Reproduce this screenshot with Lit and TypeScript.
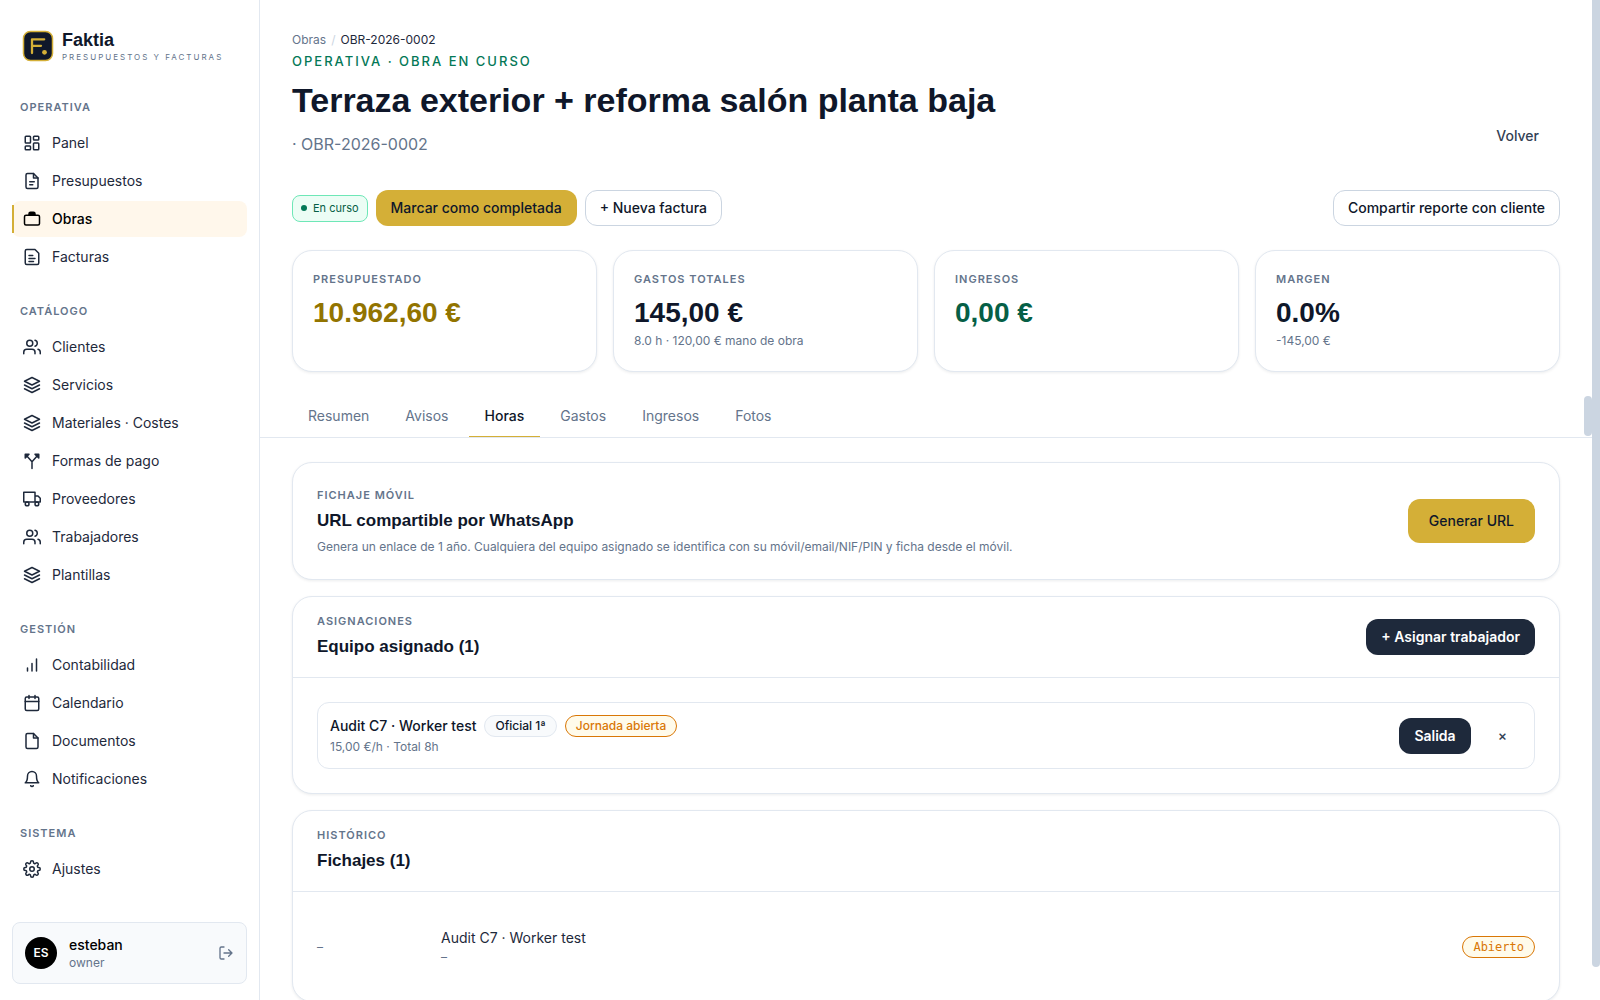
import { LitElement, html, css, svg, nothing, type TemplateResult } from "lit";
import { customElement, property, state } from "lit/decorators.js";
import { classMap } from "lit/directives/class-map.js";

const ICONS: Record<string, TemplateResult> = {
  panel: svg`<rect x="3" y="3" width="7" height="9" rx="1"/><rect x="14" y="3" width="7" height="5" rx="1"/><rect x="14" y="12" width="7" height="9" rx="1"/><rect x="3" y="16" width="7" height="5" rx="1"/>`,
  quote: svg`<path d="M14 2H6a2 2 0 0 0-2 2v16a2 2 0 0 0 2 2h12a2 2 0 0 0 2-2V8z"/><path d="M14 2v6h6M9 13h6M9 17h4"/>`,
  works: svg`<rect x="2" y="7" width="20" height="13" rx="2"/><path fill="currentColor" d="M8 7V5a2 2 0 0 1 2-2h4a2 2 0 0 1 2 2v2z"/>`,
  invoice: svg`<path d="M16 2H5a2 2 0 0 0-2 2v16a2 2 0 0 0 2 2h14a2 2 0 0 0 2-2V7z"/><path d="M8 10h5M8 14h8M8 18h6"/>`,
  users: svg`<path d="M16 21v-2a4 4 0 0 0-4-4H5a4 4 0 0 0-4 4v2"/><circle cx="9" cy="7" r="4"/><path d="M23 21v-2a4 4 0 0 0-3-3.87M16 3.13a4 4 0 0 1 0 7.75"/>`,
  layers: svg`<path d="M12 2 2 7l10 5 10-5z"/><path d="m2 12 10 5 10-5"/><path d="m2 17 10 5 10-5"/>`,
  split: svg`<path d="M12 22v-9L4 4M12 13l8-9"/><path fill="currentColor" d="M3 3h5L3 8zM21 3h-5l5 5z"/>`,
  truck: svg`<path d="M1 3h15v13H1zM16 8h4l3 3v5h-7z"/><circle cx="5.5" cy="18.5" r="2.5"/><circle cx="18.5" cy="18.5" r="2.5"/>`,
  bars: svg`<path d="M6 20v-4M12 20V10M18 20V4"/>`,
  calendar: svg`<rect x="3" y="4" width="18" height="18" rx="2"/><path d="M16 2v4M8 2v4M3 10h18"/>`,
  file: svg`<path d="M14 2H6a2 2 0 0 0-2 2v16a2 2 0 0 0 2 2h12a2 2 0 0 0 2-2V8z"/><path d="M14 2v6h6"/>`,
  bell: svg`<path d="M18 8A6 6 0 0 0 6 8c0 7-3 9-3 9h18s-3-2-3-9"/><path d="M13.73 21a2 2 0 0 1-3.46 0"/>`,
  gear: svg`<circle cx="12" cy="12" r="3"/><path d="M19.4 15a1.65 1.65 0 0 0 .33 1.82l.06.06a2 2 0 1 1-2.83 2.83l-.06-.06a1.65 1.65 0 0 0-2.8 1.17V21a2 2 0 0 1-4 0v-.09a1.65 1.65 0 0 0-2.9-1.17l-.06.06a2 2 0 1 1-2.83-2.83l.06-.06A1.65 1.65 0 0 0 3.09 14H3a2 2 0 0 1 0-4h.09a1.65 1.65 0 0 0 1.18-2.9l-.06-.06a2 2 0 1 1 2.83-2.83l.06.06A1.65 1.65 0 0 0 10 3.09V3a2 2 0 0 1 4 0v.09a1.65 1.65 0 0 0 2.9 1.18l.06-.06a2 2 0 1 1 2.83 2.83l-.06.06A1.65 1.65 0 0 0 20.91 10H21a2 2 0 0 1 0 4h-.09a1.65 1.65 0 0 0-1.51 1z"/>`,
  logout: svg`<path d="M9 21H5a2 2 0 0 1-2-2V5a2 2 0 0 1 2-2h4M16 17l5-5-5-5M21 12H9"/>`,
};

const icon = (name: string) => html`
  <svg class="icon" viewBox="0 0 24 24" width="18" height="18" fill="none" stroke="currentColor"
    stroke-width="2" stroke-linecap="round" stroke-linejoin="round" aria-hidden="true">${ICONS[name]}</svg>`;

const SECTIONS = [
  { title: "Operativa", items: [["panel", "Panel"], ["quote", "Presupuestos"], ["works", "Obras"], ["invoice", "Facturas"]] },
  { title: "Catálogo", items: [["users", "Clientes"], ["layers", "Servicios"], ["layers", "Materiales · Costes"], ["split", "Formas de pago"], ["truck", "Proveedores"], ["users", "Trabajadores"], ["layers", "Plantillas"]] },
  { title: "Gestión", items: [["bars", "Contabilidad"], ["calendar", "Calendario"], ["file", "Documentos"], ["bell", "Notificaciones"]] },
  { title: "Sistema", items: [["gear", "Ajustes"]] },
];

const METRICS = [
  { label: "Presupuestado", value: "10.962,60 €", tone: "gold", note: "" },
  { label: "Gastos totales", value: "145,00 €", tone: "", note: "8.0 h · 120,00 € mano de obra" },
  { label: "Ingresos", value: "0,00 €", tone: "green", note: "" },
  { label: "Margen", value: "0.0%", tone: "", note: "-145,00 €" },
];

const TABS = ["Resumen", "Avisos", "Horas", "Gastos", "Ingresos", "Fotos"];

const base = css`
  * { box-sizing: border-box; }
  h1, h2, p, ul { margin: 0; padding: 0; }
  ul { list-style: none; }
  a { color: inherit; text-decoration: none; }
  button { font: inherit; margin: 0; cursor: pointer; }
  svg { display: block; flex: none; }
`;

@customElement("side-nav")
export class SideNav extends LitElement {
  @property() current = "Obras";

  static styles = [base, css`
    :host {
      display: flex;
      flex-direction: column;
      padding: 28px 12px 16px;
      border-right: 1px solid #e2e8f0;
      background: #fff;
      overflow: hidden;
    }
    .brand { display: flex; align-items: flex-start; gap: 8px; padding: 2px 10px; }
    .name { font: 700 18px/20px var(--display); color: #0f172a; }
    .tag { font-size: 8px; line-height: 14px; letter-spacing: 2px; text-transform: uppercase; color: #64748b; white-space: nowrap; }
    .sections { display: flex; flex-direction: column; gap: 28px; padding-top: 33px; }
    .label { padding: 0 8px; margin-bottom: 10px; font-size: 11px; line-height: 16px; font-weight: 600; letter-spacing: 1px; text-transform: uppercase; color: #64748b; }
    .items { display: flex; flex-direction: column; gap: 2px; }
    .item { position: relative; display: flex; align-items: center; gap: 11px; height: 36px; padding: 0 11px; border-radius: 8px; font-size: 14px; color: #1e293b; }
    .item.active { background: #fff7eb; color: #000; font-weight: 500; }
    .item.active::before { content: ""; position: absolute; left: 0; top: 4px; bottom: 4px; width: 2px; background: #d4af37; }
    .user { display: flex; align-items: center; gap: 12px; height: 62px; margin-top: auto; padding: 0 12px; border: 1px solid #e2e8f0; border-radius: 8px; background: #f8fafc; }
    .avatar { display: grid; place-items: center; width: 32px; height: 32px; border-radius: 50%; background: #000; color: #fff; font-size: 12px; font-weight: 600; }
    .who { flex: 1; padding-top: 2px; line-height: 18px; }
    .login { font-size: 14px; font-weight: 500; color: #000; }
    .role { font-size: 12px; color: #64748b; }
    .logout { padding: 0; border: 0; background: none; color: #64748b; }
    .logout .icon { width: 16px; height: 16px; }
  `];

  render() {
    return html`
      <div class="brand">
        <svg viewBox="0 0 32 32" width="32" height="32" role="img" aria-label="Faktia">
          <rect x="1.5" y="1.5" width="29" height="29" rx="7" fill="#0f172a" stroke="#d4af37" stroke-width="1.5"/>
          <path d="M10 23V9.3h12.2M10 15.8h9" fill="none" stroke="#d4af37" stroke-width="2.3" stroke-linecap="round" stroke-linejoin="round"/>
          <circle cx="22.5" cy="22.3" r="2.4" fill="#d4af37"/>
        </svg>
        <div>
          <div class="name">Faktia</div>
          <div class="tag">Presupuestos y facturas</div>
        </div>
      </div>
      <nav class="sections">
        ${SECTIONS.map((s) => html`
          <div>
            <div class="label">${s.title}</div>
            <ul class="items">
              ${s.items.map(([glyph, text]) => html`
                <li><a href="#" class=${classMap({ item: true, active: text === this.current })}>${icon(glyph)}<span>${text}</span></a></li>`)}
            </ul>
          </div>`)}
      </nav>
      <div class="user">
        <div class="avatar">ES</div>
        <div class="who"><div class="login">esteban</div><div class="role">owner</div></div>
        <button class="logout" aria-label="Cerrar sesión">${icon("logout")}</button>
      </div>`;
  }
}

@customElement("app-root")
export class AppRoot extends LitElement {
  @state() private tab = "Horas";

  static styles = [base, css`
    :host {
      --body: Inter, "Liberation Sans", sans-serif;
      --display: "Liberation Sans", Arial, sans-serif;
      position: relative;
      display: grid;
      grid-template-columns: 260px minmax(0, 1fr);
      height: 100vh;
      background: #fff;
      color: #0f172a;
      font: 14px/20px var(--body);
    }
    .main { padding: 32px; margin-right: 8px; overflow-y: auto; scrollbar-width: none; }
    .thumb { position: absolute; right: 0; width: 8px; border-radius: 4px; background: #cbd5e1; }
    .page-thumb { top: 0; height: 96.7%; border-radius: 0 0 4px 4px; }
    .tabs-thumb { top: 0; height: 40px; }
    .crumbs { display: flex; gap: 5px; font-size: 12px; line-height: 16px; color: #64748b; }
    .crumbs .sep { color: #cbd5e1; }
    .crumbs .here { color: #1e293b; }
    .head { display: flex; justify-content: space-between; align-items: flex-end; margin-top: 4px; }
    .kicker { font-size: 13px; line-height: 18px; font-weight: 500; letter-spacing: 2px; text-transform: uppercase; color: #047857; }
    h1 { margin: 10px 0; font: 700 34px/40px var(--display); }
    .ref { font-size: 16px; line-height: 28px; color: #64748b; }
    .btn { display: inline-flex; align-items: center; justify-content: center; height: 36px; padding: 0 14px; border: 1px solid transparent; border-radius: 12px; background: none; color: #0f172a; font-weight: 500; white-space: nowrap; }
    .btn.tall { height: 44px; padding: 0 20px; }
    .btn.gold { background: #d4af37; }
    .btn.line { border-color: #cbd5e1; background: #fff; }
    .btn.dark { background: #1e293b; color: #fff; font-weight: 600; }
    .btn.ghost { color: #334155; }
    .actions { display: flex; align-items: center; gap: 8px; margin-top: 32px; }
    .spacer { flex: 1; }
    .status { display: flex; align-items: center; gap: 6px; height: 27px; padding: 0 8px; border: 1px solid #6ee7b7; border-radius: 8px; background: #ecfdf5; color: #065f46; font-size: 11px; }
    .status::before { content: ""; width: 6px; height: 6px; border-radius: 50%; background: #047857; }
    .metrics { display: grid; grid-template-columns: repeat(4, minmax(0, 1fr)); gap: 16px; margin-top: 24px; }
    .card { border: 1px solid #e2e8f0; border-radius: 20px; background: #fff; box-shadow: 0 1px 3px rgba(15, 23, 42, 0.08); }
    .metric { padding: 20px; }
    .label { font-size: 11px; line-height: 16px; font-weight: 600; letter-spacing: 1px; text-transform: uppercase; color: #64748b; }
    .value { margin-top: 8px; font: 700 28px/36px var(--display); }
    .value.gold { color: #927400; }
    .value.green { color: #065f46; }
    .note { min-height: 20px; font-size: 12px; color: #64748b; }
    .tabs { position: relative; display: flex; gap: 4px; margin: 24px -32px 0; padding: 0 32px; border-bottom: 1px solid #e2e8f0; }
    .tab { height: 41px; padding: 0 16px; border: 0; border-bottom: 1px solid transparent; background: none; color: #64748b; }
    .tab.on { border-color: #d4af37; color: #0f172a; font-weight: 500; }
    .stack { display: flex; flex-direction: column; gap: 16px; margin-top: 24px; }
    .split { display: flex; align-items: center; justify-content: space-between; }
    .share { padding: 24px; }
    h2 { margin-top: 4px; font: 700 17px/28px var(--display); }
    .desc { margin-top: 4px; font-size: 12px; line-height: 16px; color: #64748b; }
    .top { padding: 16px 24px; border-bottom: 1px solid #e2e8f0; }
    .body { padding: 24px; }
    .worker { padding: 12px; border: 1px solid #e2e8f0; border-radius: 12px; }
    .line { display: flex; align-items: center; gap: 8px; }
    .line.wide { gap: 12px; }
    .person { font-weight: 500; }
    .rate { font-size: 12px; line-height: 19px; color: #64748b; }
    .pill { display: inline-flex; align-items: center; height: 22px; padding: 0 10px; border: 1px solid #e2e8f0; border-radius: 11px; background: #f8fafc; font-size: 12px; font-weight: 500; }
    .pill.warn { border-color: #d97706; background: #fffbeb; color: #d97706; }
    .pill.mono { font-family: "DejaVu Sans Mono", monospace; }
    .entry { display: grid; grid-template-columns: 100px minmax(0, 1fr) auto; align-items: center; gap: 24px; padding: 12px 0; color: #1e293b; }
    .dim { font-size: 12px; line-height: 17px; color: #64748b; }
  `];

  render() {
    return html`
      <side-nav current="Obras"></side-nav>
      <main class="main">
        <nav class="crumbs" aria-label="Ruta"><a href="#">Obras</a><span class="sep">/</span><span class="here">OBR-2026-0002</span></nav>
        <header class="head">
          <div>
            <div class="kicker">Operativa · Obra en curso</div>
            <h1>Terraza exterior + reforma salón planta baja</h1>
            <p class="ref">· OBR-2026-0002</p>
          </div>
          <a href="#" class="btn tall ghost">Volver</a>
        </header>
        <div class="actions">
          <span class="status">En curso</span>
          <button class="btn gold">Marcar como completada</button>
          <button class="btn line">+ Nueva factura</button>
          <span class="spacer"></span>
          <button class="btn line">Compartir reporte con cliente</button>
        </div>
        <section class="metrics">
          ${METRICS.map((m) => html`
            <div class="card metric">
              <div class="label">${m.label}</div>
              <div class="value ${m.tone}">${m.value}</div>
              <div class="note">${m.note || nothing}</div>
            </div>`)}
        </section>
        <div class="tabs" role="tablist">
          ${TABS.map((t) => html`
            <button role="tab" aria-selected=${t === this.tab} class=${classMap({ tab: true, on: t === this.tab })}
              @click=${() => (this.tab = t)}>${t}</button>`)}
          <span class="thumb tabs-thumb" aria-hidden="true"></span>
        </div>
        <div class="stack">
          <section class="card share split">
            <div>
              <div class="label">Fichaje móvil</div>
              <h2>URL compartible por WhatsApp</h2>
              <p class="desc">Genera un enlace de 1 año. Cualquiera del equipo asignado se identifica con su móvil/email/NIF/PIN y ficha desde el móvil.</p>
            </div>
            <button class="btn tall gold">Generar URL</button>
          </section>
          <section class="card">
            <div class="top split">
              <div><div class="label">Asignaciones</div><h2>Equipo asignado (1)</h2></div>
              <button class="btn dark">+ Asignar trabajador</button>
            </div>
            <div class="body">
              <div class="worker split">
                <div>
                  <div class="line"><span class="person">Audit C7 · Worker test</span><span class="pill">Oficial 1ª</span><span class="pill warn">Jornada abierta</span></div>
                  <div class="rate">15,00 €/h · Total 8h</div>
                </div>
                <div class="line wide"><button class="btn dark">Salida</button><button class="btn ghost" aria-label="Quitar">×</button></div>
              </div>
            </div>
          </section>
          <section class="card">
            <div class="top"><div class="label">Histórico</div><h2>Fichajes (1)</h2></div>
            <div class="body">
              <div class="entry">
                <span class="dim">–</span>
                <div><div>Audit C7 · Worker test</div><div class="dim">–</div></div>
                <span class="pill warn mono">Abierto</span>
              </div>
            </div>
          </section>
        </div>
      </main>
      <span class="thumb page-thumb" aria-hidden="true"></span>`;
  }
}
